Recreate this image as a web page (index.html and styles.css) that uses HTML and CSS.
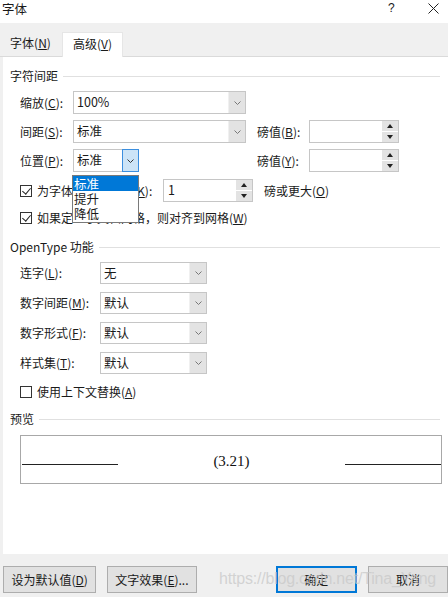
FILE: index.html
```html
<!DOCTYPE html>
<html lang="zh-CN">
<head>
<meta charset="utf-8">
<link rel="stylesheet" href="styles.css">
</head>
<body>
<div class="dialog">
  <div class="titlebar">
    <span class="title">字体</span>
    <span class="help">?</span>
    <span class="close">
      <svg width="11" height="11" viewBox="0 0 11 11"><path d="M0.5 0.5 L10.5 10.5 M10.5 0.5 L0.5 10.5" stroke="#222" stroke-width="1" fill="none"/></svg>
    </span>
  </div>
  <div class="tabbar">
    <div class="tab">字体(<u>N</u>)</div>
    <div class="tab active">高级(<u>V</u>)</div>
  </div>
  <div class="panel">
    <div class="group-head g1"><span>字符间距</span><i></i></div>

    <div class="row r-first">
      <span class="label">缩放(<u>C</u>):</span>
      <div class="combo wide"><span class="val">100%</span><span class="btn"><svg width="7" height="4" viewBox="0 0 7 4"><path d="M0.5 0.5 L3.5 3.5 L6.5 0.5" stroke="#777" fill="none"/></svg></span></div>
    </div>
    <div class="row r-next">
      <span class="label">间距(<u>S</u>):</span>
      <div class="combo wide"><span class="val">标准</span><span class="btn"><svg width="7" height="4" viewBox="0 0 7 4"><path d="M0.5 0.5 L3.5 3.5 L6.5 0.5" stroke="#777" fill="none"/></svg></span></div>
      <span class="label pt">磅值(<u>B</u>):</span>
      <div class="spin"><span class="val"></span><span class="arrows"><span class="up"></span><span class="down"></span></span></div>
    </div>
    <div class="row r-next pos-row">
      <span class="label">位置(<u>P</u>):</span>
      <div class="combo narrow"><span class="val">标准</span><span class="btn open"><svg width="7" height="4" viewBox="0 0 7 4"><path d="M0.5 0.5 L3.5 3.5 L6.5 0.5" stroke="#333" fill="none"/></svg></span></div>
      <span class="label pt2">磅值(<u>Y</u>):</span>
      <div class="spin"><span class="val"></span><span class="arrows"><span class="up"></span><span class="down"></span></span></div>
      <ul class="droplist">
        <li class="sel">标准</li>
        <li>提升</li>
        <li>降低</li>
      </ul>
    </div>
    <div class="row r-check1">
      <span class="check on"></span>
      <span class="ctext">为字体调整字间距(<u>K</u>):</span>
      <div class="spin small"><span class="val">1</span><span class="arrows"><span class="up"></span><span class="down"></span></span></div>
      <span class="after">磅或更大(<u>O</u>)</span>
    </div>
    <div class="row r-check2">
      <span class="check on"></span>
      <span class="ctext">如果定义了文档网格，则对齐到网格(<u>W</u>)</span>
    </div>

    <div class="group-head g2"><span>OpenType 功能</span><i></i></div>

    <div class="row ot ot-first">
      <span class="label lw">连字(<u>L</u>):</span>
      <div class="combo ot-combo"><span class="val">无</span><span class="btn"><svg width="7" height="4" viewBox="0 0 7 4"><path d="M0.5 0.5 L3.5 3.5 L6.5 0.5" stroke="#777" fill="none"/></svg></span></div>
    </div>
    <div class="row ot">
      <span class="label lw">数字间距(<u>M</u>):</span>
      <div class="combo ot-combo"><span class="val">默认</span><span class="btn"><svg width="7" height="4" viewBox="0 0 7 4"><path d="M0.5 0.5 L3.5 3.5 L6.5 0.5" stroke="#777" fill="none"/></svg></span></div>
    </div>
    <div class="row ot">
      <span class="label lw">数字形式(<u>F</u>):</span>
      <div class="combo ot-combo"><span class="val">默认</span><span class="btn"><svg width="7" height="4" viewBox="0 0 7 4"><path d="M0.5 0.5 L3.5 3.5 L6.5 0.5" stroke="#777" fill="none"/></svg></span></div>
    </div>
    <div class="row ot">
      <span class="label lw">样式集(<u>T</u>):</span>
      <div class="combo ot-combo"><span class="val">默认</span><span class="btn"><svg width="7" height="4" viewBox="0 0 7 4"><path d="M0.5 0.5 L3.5 3.5 L6.5 0.5" stroke="#777" fill="none"/></svg></span></div>
    </div>
    <div class="row r-check3">
      <span class="check"></span>
      <span class="ctext">使用上下文替换(<u>A</u>)</span>
    </div>

    <div class="group-head g3"><span>预览</span><i></i></div>
    <div class="preview">
      <span class="pline"></span>
      <span class="ptext">(3.21)</span>
      <span class="pline"></span>
    </div>
  </div>
  <div class="footer">
    <button class="b b1">设为默认值(<u>D</u>)</button>
    <button class="b b2">文字效果(<u>E</u>)...</button>
    <button class="b b3 def">确定</button>
    <button class="b b4">取消</button>
    <span class="watermark">https://blog.csdn.net/Tina_Yang</span>
  </div>
</div>
</body>
</html>
```
FILE: styles.css
```css
* { box-sizing: border-box; }
html, body { margin: 0; padding: 0; }
body {
  width: 448px;
  height: 597px;
  overflow: hidden;
  background: #f0f0f0;
  font-family: "Noto Sans CJK SC", "Noto Sans", sans-serif;
  font-size: 12px;
  color: #1a1a1a;
}
u { text-decoration: underline; text-underline-offset: 1px; }
.dialog { width: 448px; height: 597px; display: flex; flex-direction: column; position: relative; }

.titlebar {
  height: 23px;
  background: #fff;
  display: flex;
  align-items: flex-start;
  position: relative;
  padding-top: 1px;
}
.title { margin-left: 2px; font-size: 12.5px; line-height: 15px; }
.help { position: absolute; left: 388px; top: 1px; font-size: 12px; line-height: 14px; font-family: "Liberation Sans", sans-serif; }
.close { position: absolute; left: 428px; top: 3px; line-height: 0; }

.tabbar {
  height: 34px;
  background: #f0f0f0;
  display: flex;
  align-items: flex-end;
  border-bottom: 1px solid #dadada;
}
.tab {
  height: 24px;
  line-height: 22px;
  font-size: 12px;
  text-align: center;
}
.tab:first-child { width: 55px; margin-left: 3px; padding: 0; }
.tab.active {
  background: #fff;
  height: 25px;
  width: 61px;
  margin-left: 4px;
  padding: 0;
  margin-bottom: -1px;
  border: 1px solid #e6e6e6;
  border-bottom: none;
}

.panel {
  flex: 0 0 497px;
  background: #fff;
  margin-left: 3px;
  padding-left: 7px;
  display: flex;
  flex-direction: column;
  position: relative;
}

.group-head {
  height: 16px;
  display: flex;
  align-items: center;
  font-size: 12px;
}
.group-head span { line-height: 16px; }
.group-head i { flex: 1; height: 1px; background: #e0e0e0; margin-left: 5px; margin-right: 8px; }
.g1 { margin-top: 11px; }
.g2 { margin-top: 12px; }
.g3 { margin-top: 10px; }

.row { display: flex; align-items: center; height: 23px; position: relative; }
.r-first { margin-top: 7px; }
.r-next { margin-top: 6px; }
.label { width: 63px; padding-left: 10px; flex: 0 0 auto; line-height: 16px; white-space: nowrap; }
.label.lw { width: 90px; }
.label.pt { width: 52px; margin-left: 11px; padding-left: 0; }
.label.pt2 { width: 52px; margin-left: 118px; padding-left: 0; }

.combo {
  height: 23px;
  border: 1px solid #c6c6c6;
  display: flex;
  align-items: stretch;
  background: #fff;
  flex: 0 0 auto;
}
.combo .val { flex: 1; padding-left: 3px; line-height: 20px; font-size: 12.5px; }
.combo .btn {
  width: 17px;
  background: #e3e3e3;
  display: flex;
  align-items: center;
  justify-content: center;
  border-left: 1px solid #f0f0f0;
}
.combo .btn.open { background: #cce4f7; border: 1px solid #3c8fdf; margin: -1px -1px -1px 0; width: 17px; }
.combo.wide { width: 173px; }
.combo.narrow { width: 66px; }

.spin {
  width: 90px;
  height: 23px;
  border: 1px solid #c6c6c6;
  display: flex;
  background: #fff;
  flex: 0 0 auto;
}
.spin .val { flex: 1; padding-left: 4px; line-height: 20px; font-size: 12.5px; }
.spin .arrows { width: 16px; display: flex; flex-direction: column; gap: 1px; background: #fff; }
.spin .up, .spin .down {
  flex: 1;
  background: #e3e3e3;
  position: relative;
}
.spin .up::after, .spin .down::after {
  content: "";
  position: absolute;
  left: 5px;
  top: 3px;
  border-left: 3px solid transparent;
  border-right: 3px solid transparent;
}
.spin .up::after { border-bottom: 4px solid #222; }
.spin .down::after { border-top: 4px solid #222; top: 3px; }

.droplist {
  position: absolute;
  left: 62px;
  top: 26px;
  width: 67px;
  height: 48px;
  margin: 0;
  padding: 0;
  list-style: none;
  background: #fff;
  border: 1px solid #7a7a7a;
  z-index: 5;
}
.droplist li { height: 15px; line-height: 15px; padding-left: 1px; font-size: 12.5px; }
.droplist li.sel { background: #0078d7; color: #fff; }

.r-check1 { margin-top: 7px; }
.r-check2 { margin-top: 7px; height: 18px; }
.r-check3 { margin-top: 9px; height: 18px; }
.check {
  width: 12px; height: 12px;
  border: 1px solid #333;
  margin-left: 10px;
  flex: 0 0 auto;
  position: relative;
  background: #fff;
}
.check.on::after {
  content: "";
  position: absolute;
  left: 3px; top: 0px;
  width: 4px; height: 7px;
  border-right: 1px solid #222;
  border-bottom: 1px solid #222;
  transform: rotate(40deg);
}
.ctext { margin-left: 5px; line-height: 16px; white-space: nowrap; }
.r-check1 .ctext { width: 121px; flex: 0 0 121px; overflow: hidden; }
.spin.small { margin-left: 5px; }
.after { margin-left: 11px; line-height: 16px; }

.ot { height: 22px; margin-top: 8px; }
.ot-first { margin-top: 7px; }
.ot .combo { height: 22px; }
.ot-combo { width: 107px; }
.ot .combo .val { line-height: 19px; }

.preview {
  margin-top: 8px;
  margin-left: 10px;
  width: 422px;
  height: 49px;
  border: 1px solid #a8a8a8;
  display: flex;
  align-items: center;
  justify-content: space-between;
  position: relative;
}
.pline { width: 96px; height: 1px; background: #222; margin-top: 10px; }
.pline:first-child { margin-left: 1px; }
.ptext {
  font-family: "Liberation Serif", serif;
  font-size: 15px;
  color: #111;
  margin-top: 3px;
}

.footer {
  flex: 1;
  background: #f0f0f0;
  position: relative;
  display: flex;
  align-items: flex-start;
  padding-top: 12px;
}
.b {
  height: 27px;
  background: #e1e1e1;
  border: 1px solid #adadad;
  font-family: "Noto Sans CJK SC", "Noto Sans", sans-serif;
  font-size: 12px;
  color: #1a1a1a;
  padding: 0;
  line-height: 16px;
}
.b1 { margin-left: 3px; width: 94px; }
.b2 { margin-left: 11px; width: 90px; }
.b3 { margin-left: 79px; width: 82px; }
.b4 { margin-left: 11px; width: 80px; flex: 0 0 80px; }
.def { border: 2px solid #0078d7; }
.watermark {
  position: absolute;
  left: 219px;
  top: 16px;
  font-family: "Liberation Sans", sans-serif;
  font-size: 16px;
  color: rgba(200,200,200,0.75);
  letter-spacing: -0.2px;
  pointer-events: none;
  white-space: nowrap;
}
```
